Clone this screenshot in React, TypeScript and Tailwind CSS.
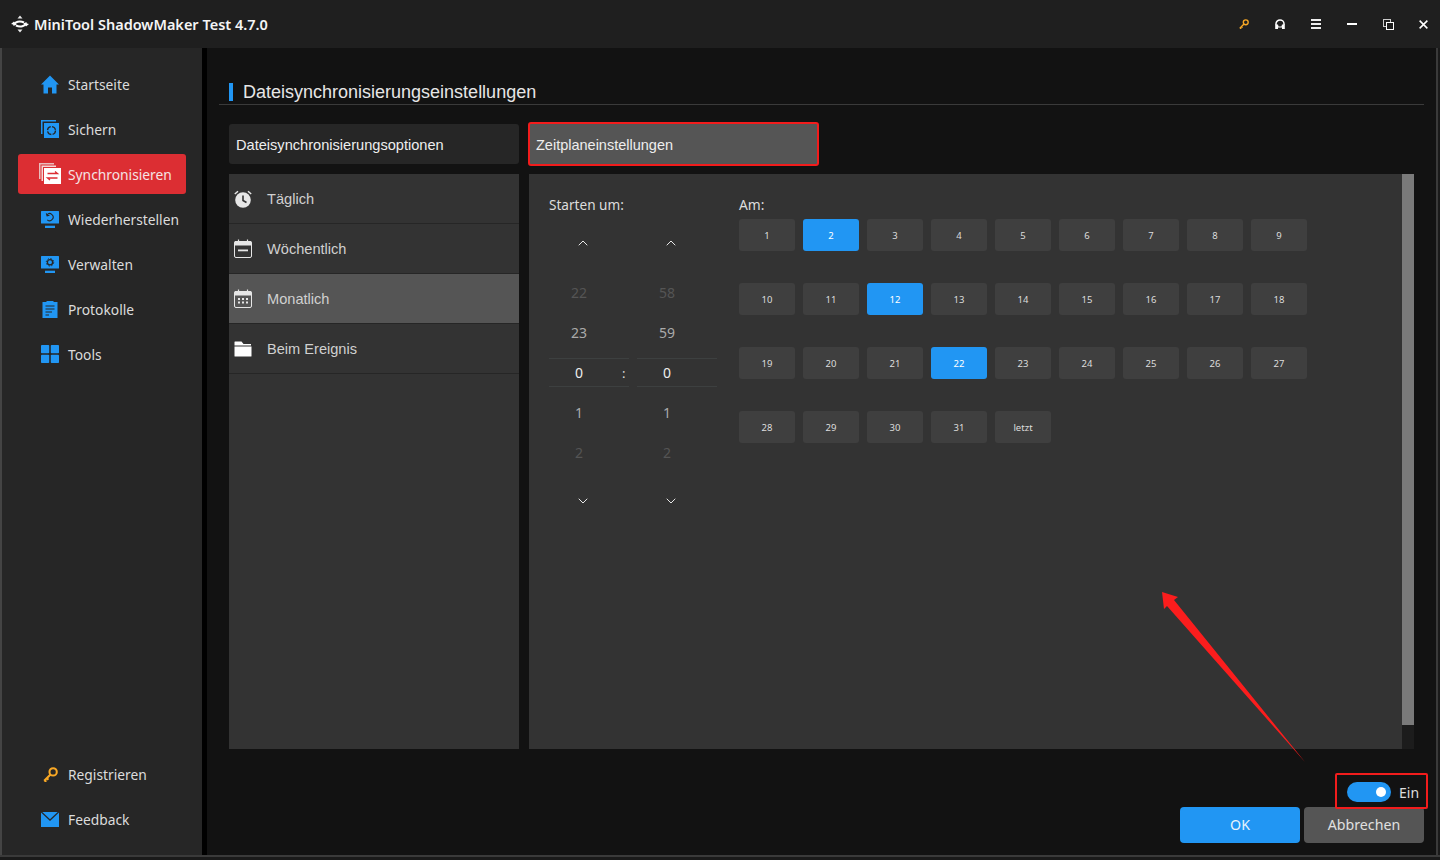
import React from 'react';
import { ChevronDown, ChevronUp } from 'lucide-react';

const BLUE = '#2196f3';
const SIDE = '#262626';

const HomeIcon = () => (
  <svg width="18" height="19" viewBox="0 0 18 19">
    <path d="M9 0.500 L18 9.500 L15.500 9.500 L15.500 18.500 L11 18.500 L11 12.500 L7 12.500 L7 18.500 L2.500 18.500 L2.500 9.500 L0 9.500 Z" fill={BLUE} />
  </svg>
);

const BackupIcon = () => (
  <svg width="18" height="18" viewBox="0 0 18 18">
    <path d="M0 0 H15 V1.500 H1.500 V14 H0 Z" fill={BLUE} />
    <rect x="3" y="3" width="15" height="15" fill={BLUE} />
    <circle cx="10.500" cy="10.500" r="4" stroke={SIDE} strokeWidth="1.300" strokeDasharray="5 1.300" fill="none" />
  </svg>
);

const SyncIcon = () => (
  <svg width="22" height="22" viewBox="0 0 22 22">
    <path d="M0 0 H15 V1.500 H1.500 V16 H0 Z" fill="#e9bcbc" />
    <path d="M2.500 2.500 H17 V4 H4 V18 H2.500 Z" fill="#f5d8d8" />
    <rect x="5" y="5" width="17" height="16" fill="#fff" />
    <path d="M8.500 10.500 H18.500 L16 8.500 M18.500 15 H8.500 L11 17" stroke="#dc2e33" strokeWidth="1.300" fill="none" />
  </svg>
);

const MonitorIcon = ({ gear }: { gear?: boolean }) => (
  <svg width="18" height="17" viewBox="0 0 18 17">
    <rect x="0" y="0" width="18" height="12.500" rx="0.500" fill={BLUE} />
    <rect x="4" y="14.700" width="10" height="2.300" fill={BLUE} />
    {gear ? (
      <>
        <circle cx="9" cy="6.300" r="2.600" stroke={SIDE} strokeWidth="1.300" fill="none" />
        <circle cx="9" cy="6.300" r="3.700" stroke={SIDE} strokeWidth="1" strokeDasharray="1.400 1.500" fill="none" />
      </>
    ) : (
      <path d="M6 3.800 A3.500 3.500 0 1 1 6.300 8.800 M5.300 2.300 L6.100 4.800 L8.500 4.200" stroke={SIDE} strokeWidth="1.100" fill="none" />
    )}
  </svg>
);

const LogIcon = () => (
  <svg width="16" height="17" viewBox="0 0 16 17">
    <path d="M0.500 1 H4.500 V0 H11.500 V1 H15.500 V17 H0.500 Z" fill={BLUE} />
    <path d="M3.500 5 H12.500 M3.500 8 H12.500 M3.500 11 H10 M3.500 14 H7" stroke={SIDE} strokeWidth="1.200" fill="none" />
  </svg>
);

const ToolsIcon = () => (
  <svg width="18" height="18" viewBox="0 0 18 18">
    <rect x="0" y="0" width="8.200" height="8.200" rx="0.800" fill={BLUE} />
    <rect x="9.800" y="0" width="8.200" height="8.200" rx="0.800" fill={BLUE} />
    <rect x="0" y="9.800" width="8.200" height="8.200" rx="0.800" fill={BLUE} />
    <rect x="9.800" y="9.800" width="8.200" height="8.200" rx="0.800" fill={BLUE} />
  </svg>
);

const KeyIcon = ({ size = 16 }: { size?: number }) => (
  <svg width={size} height={size} viewBox="0 0 16 16">
    <circle cx="10.800" cy="5.200" r="3.900" stroke="#f9a825" strokeWidth="2.200" fill="none" />
    <path d="M8 8 L1.300 14.700 M1.500 14 L3.500 15.800 M3.800 11.800 L5.800 13.600" stroke="#f9a825" strokeWidth="2.200" fill="none" />
  </svg>
);

const MailIcon = () => (
  <svg width="18" height="15" viewBox="0 0 18 15">
    <path d="M0 0.500 L9 9 L18 0.500 V15 H0 Z" fill={BLUE} />
    <path d="M1.300 0 H16.700 L9 7.200 Z" fill={BLUE} />
  </svg>
);

const ClockIcon = () => (
  <svg width="18" height="18" viewBox="0 0 18 18">
    <circle cx="9" cy="10" r="7.800" fill="#e6e6e6" />
    <path d="M9 5.500 V10.500 L12.500 12.500" stroke="#333" strokeWidth="1.600" fill="none" />
    <path d="M0.800 4 L4 1.200 M17.200 4 L14 1.200" stroke="#e6e6e6" strokeWidth="1.500" fill="none" />
  </svg>
);

const WeekIcon = () => (
  <svg width="18" height="19" viewBox="0 0 18 19">
    <path d="M1.500 2 H16.500 A1 1 0 0 1 17.500 3 V6.500 H0.500 V3 A1 1 0 0 1 1.500 2 Z" fill="#e6e6e6" />
    <rect x="0.500" y="2.500" width="17" height="16" rx="1.500" stroke="#e6e6e6" strokeWidth="1" fill="none" />
    <path d="M4.500 0.500 V3 M13.500 0.500 V3" stroke="#e6e6e6" strokeWidth="1.200" />
    <rect x="4" y="10.500" width="10" height="1.800" fill="#e6e6e6" />
  </svg>
);

const MonthIcon = () => (
  <svg width="18" height="19" viewBox="0 0 18 19">
    <path d="M1.500 2 H16.500 A1 1 0 0 1 17.500 3 V6.500 H0.500 V3 A1 1 0 0 1 1.500 2 Z" fill="#e6e6e6" />
    <rect x="0.500" y="2.500" width="17" height="16" rx="1.500" stroke="#e6e6e6" strokeWidth="1" fill="none" />
    <path d="M4.500 0.500 V3 M13.500 0.500 V3" stroke="#e6e6e6" strokeWidth="1.200" />
    <path d="M4 9 H6 V11 H4 Z M8 9 H10 V11 H8 Z M12 9 H14 V11 H12 Z M4 12.500 H6 V14.500 H4 Z M8 12.500 H10 V14.500 H8 Z M12 12.500 H14 V14.500 H12 Z" fill="#e6e6e6" />
  </svg>
);

const FolderIcon = () => (
  <svg width="18" height="16" viewBox="0 0 18 16">
    <path d="M1 0.500 H7.500 L9.500 3 H17 V4.500 H0.500 V1 A0.500 0.500 0 0 1 1 0.500 Z" fill="#fff" />
    <path d="M0.500 5.500 H17.500 V15 A0.500 0.500 0 0 1 17 15.500 H1 A0.500 0.500 0 0 1 0.500 15 Z" fill="#fff" />
  </svg>
);

const LogoIcon = () => (
  <svg width="18" height="18" viewBox="0 0 18 18">
    <path d="M6.500 3.500 L9 0.500 L11.500 3.500 Z M6.500 14.500 L9 17.500 L11.500 14.500 Z" fill="#e8e8e8" />
    <path d="M3 10.500 C3.500 6.500 9 5.500 13 7.500" stroke="#fff" strokeWidth="2" fill="none" />
    <path d="M15 7.500 C14.500 11.500 9 12.500 5 10.500" stroke="#fff" strokeWidth="2" fill="none" />
    <path d="M0 9 L3 6.500 L6 10.500 Z M18 9 L15 11.500 L12 7.500 Z" fill="#fff" />
  </svg>
);

const HeadsetIcon = () => (
  <svg width="10" height="10" viewBox="0 0 10 10">
    <path d="M1 6 V4.800 A4 3.800 0 0 1 9 4.800 V6" stroke="#fff" strokeWidth="1.500" fill="none" />
    <path d="M0.200 5.500 H3 L3.500 7.500 H6.500 L7 5.500 H9.800 V10 H7 V8.500 H3 V10 H0.200 Z" fill="#fff" />
  </svg>
);

const navTop = [
  { label: 'Startseite', icon: <HomeIcon /> },
  { label: 'Sichern', icon: <BackupIcon /> },
  { label: 'Synchronisieren', icon: <SyncIcon />, active: true },
  { label: 'Wiederherstellen', icon: <MonitorIcon /> },
  { label: 'Verwalten', icon: <MonitorIcon gear /> },
  { label: 'Protokolle', icon: <LogIcon /> },
  { label: 'Tools', icon: <ToolsIcon /> },
];

const navBottom = [
  { label: 'Registrieren', icon: <KeyIcon size={15} /> },
  { label: 'Feedback', icon: <MailIcon /> },
];

const schedules = [
  { label: 'Täglich', icon: <ClockIcon /> },
  { label: 'Wöchentlich', icon: <WeekIcon /> },
  { label: 'Monatlich', icon: <MonthIcon />, active: true },
  { label: 'Beim Ereignis', icon: <FolderIcon /> },
];

const days = [...Array.from({ length: 31 }, (_, i) => String(i + 1)), 'letzt'];
const selectedDays = ['2', '12', '22'];

const NavItem: React.FC<{ label: string; icon: React.ReactNode; active?: boolean }> = ({ label, icon, active }) => (
  <div className={`flex h-10 items-center rounded-[3px] ${active ? 'bg-[#dc2e33] text-[#f5e4e4]' : 'text-[#dcdcdc]'}`}>
    <div className="flex w-[50px] shrink-0 justify-center pl-[14px]">{icon}</div>
    <span className="pt-[2px] text-[13.800px]">{label}</span>
  </div>
);

const TimeColumn: React.FC<{ values: string[] }> = ({ values }) => (
  <div className="flex w-20 flex-col">
    <div className="mt-[1px] flex h-[20px] justify-center pr-[12px] text-[#e8e8e8]">
      <ChevronUp size={16} strokeWidth={1.500} />
    </div>
    <div className="mt-[17px] flex flex-col text-center text-[14px]">
      <div className="flex h-10 items-center justify-center pr-5 text-[#555]">{values[0]}</div>
      <div className="flex h-10 items-center justify-center pr-5 text-[#aaa]">{values[1]}</div>
      <div className="mb-[5px] mt-[6px] flex h-[29px] items-center justify-center border-y border-[#3d4040] pr-5 text-[#eee]">{values[2]}</div>
      <div className="flex h-10 items-center justify-center pr-5 text-[#aaa]">{values[3]}</div>
      <div className="flex h-10 items-center justify-center pr-5 text-[#555]">{values[4]}</div>
    </div>
    <div className="mt-[21px] flex justify-center pr-[12px] text-[#e8e8e8]">
      <ChevronDown size={16} strokeWidth={1.500} />
    </div>
  </div>
);

export default function App() {
  return (
    <div className="relative flex h-[860px] w-[1440px] flex-col overflow-hidden bg-[#1a1a1a] font-['Noto_Sans','Open_Sans',sans-serif]">
      <header className="flex h-12 shrink-0 items-center justify-between bg-[#1f1f1f] pl-[11px] pr-[12px]">
        <div className="flex items-center gap-[5px]">
          <LogoIcon />
          <span className="pt-[2px] text-[14.500px] font-semibold text-[#f5f5f5]">MiniTool ShadowMaker Test 4.7.0</span>
        </div>
        <div className="flex items-center gap-[26px]">
          <KeyIcon size={10} />
          <HeadsetIcon />
          <div className="flex w-[10px] flex-col gap-[2px]">
            <div className="h-[2px] bg-[#eee]" />
            <div className="h-[2px] bg-[#eee]" />
            <div className="h-[2px] bg-[#eee]" />
          </div>
          <div className="h-[2px] w-[10px] bg-white" />
          <div className="relative h-[11px] w-[11px]">
            <div className="absolute left-0 top-0 h-[8px] w-[8px] border border-[#ccc]" />
            <div className="absolute bottom-0 right-0 h-[8px] w-[8px] border-[1.500px] border-white bg-[#1f1f1f]" />
          </div>
          <svg className="-ml-[1px]" width="9" height="9" viewBox="0 0 10 10">
            <path d="M0.700 0.700 L9.300 9.300 M9.300 0.700 L0.700 9.300" stroke="#fff" strokeWidth="1.700" />
          </svg>
        </div>
      </header>

      <div className="flex h-[809px] shrink-0 border-b-[2px] border-[#3a3a3a]">
        <aside className="flex w-[202px] shrink-0 flex-col justify-between border-l-[2px] border-[#444] bg-[#262626] pb-4 pl-4 pr-4 pt-4">
          <nav className="flex flex-col gap-[5px]">
            {navTop.map((n) => (
              <NavItem key={n.label} {...n} />
            ))}
          </nav>
          <nav className="flex flex-col gap-[5px]">
            {navBottom.map((n) => (
              <NavItem key={n.label} {...n} />
            ))}
          </nav>
        </aside>
        <div className="w-[5px] shrink-0 bg-black" />

        <main className="flex w-[1229px] shrink-0 flex-col bg-[#121212] px-3 font-['Liberation_Sans',Arial,sans-serif]">
          <div className="flex h-[57px] items-end border-b border-[#3a3a3a] pl-[10px]">
            <div className="mb-[3px] mr-[10px] h-[18px] w-1 bg-[#2196f3]" />
            <h1 className="text-[18px] leading-[24px] text-[#e6e6e6]">Dateisynchronisierungseinstellungen</h1>
          </div>

          <div className="mt-[19px] flex h-10 items-center pl-[10px] text-[#eee]">
            <div className="flex h-10 w-[290px] items-center rounded-[3px] bg-[#262626] pl-[7px] pt-[4px] text-[14.600px]">Dateisynchronisierungsoptionen</div>
            <div className="ml-[9px] flex h-[44px] w-[291px] items-center rounded-[3px] border-[2px] border-[#f21c1c] bg-[#555] pl-[6px] pt-[4px] text-[14.500px]">Zeitplaneinstellungen</div>
          </div>

          <div className="mt-[10px] flex h-[575px] gap-[10px] pl-[10px]">
            <div className="w-[290px] bg-[#333]">
              {schedules.map((s) => (
                <div key={s.label} className={`flex h-[50px] items-center border-b border-[#262626] pl-[5px] text-[14.600px] text-[#d0d0d0] ${s.active ? 'bg-[#555]' : ''}`}>
                  <div className="flex w-[18px] justify-center">{s.icon}</div>
                  <span className="ml-[15px] pt-[2px]">{s.label}</span>
                </div>
              ))}
            </div>

            <div className="flex w-[885px]">
              <div className="flex w-[873px] bg-[#333] pl-5 pt-[21px] font-['Noto_Sans','Open_Sans',sans-serif]">
                <div className="w-[190px] shrink-0">
                  <div className="text-[13.600px] leading-5 text-[#ddd]">Starten um:</div>
                  <div className="relative mt-[19px] flex gap-2">
                    <TimeColumn values={['22', '23', '0', '1', '2']} />
                    <TimeColumn values={['58', '59', '0', '1', '2']} />
                    <span className="absolute left-[73px] top-[130px] text-[13px] text-[#ddd]">:</span>
                  </div>
                </div>
                <div>
                  <div className="text-[13.800px] leading-5 text-[#ddd]">Am:</div>
                  <div className="mt-[4px] grid grid-cols-[repeat(9,56px)] gap-x-2 gap-y-8">
                    {days.map((d) => (
                      <div key={d} className={`flex h-8 items-center justify-center rounded-[3px] pt-[2px] text-[9.500px] ${selectedDays.includes(d) ? 'bg-[#2196f3] text-white' : 'bg-[#3f3f3f] text-[#ddd]'}`}>
                        {d}
                      </div>
                    ))}
                  </div>
                </div>
              </div>
              <div className="flex w-3 flex-col bg-[#1c1c1c]">
                <div className="h-[551px] bg-[#7a7a7a]" />
              </div>
            </div>
          </div>

          <div className="relative z-10 mt-6 flex justify-end font-['Noto_Sans','Open_Sans',sans-serif]">
            <div className="-mr-1 flex h-9 w-[93px] items-center gap-2 rounded-[2px] border-[2px] border-[#f21c1c] pl-[10px] pt-[2px]">
              <div className="flex h-[20px] w-[44px] items-center justify-end rounded-full bg-[#2196f3] pr-[5px]">
                <div className="h-[10px] w-[10px] rounded-full bg-white" />
              </div>
              <span className="text-[14px] text-[#ddd]">Ein</span>
            </div>
          </div>

          <div className="mt-[-2px] flex justify-end gap-1 font-['Noto_Sans','Open_Sans',sans-serif] text-[14.200px]">
            <div className="flex h-9 w-[120px] items-center justify-center rounded-[4px] bg-[#2196f3] text-[#e8f3fc]">OK</div>
            <div className="flex h-9 w-[120px] items-center justify-center rounded-[4px] bg-[#555] text-[#e0e0e0]">Abbrechen</div>
          </div>
        </main>

        <div className="w-[2px] shrink-0 bg-[#3a3a3a]" />
      </div>

      <svg className="absolute left-[1150px] top-[580px]" width="170" height="195" viewBox="1150 580 170 195">
        <path d="M1162 592 L1178 597 L1174 600 L1305 762 L1167 606 L1164 609 Z" fill="#fb1d1d" />
      </svg>
    </div>
  );
}
